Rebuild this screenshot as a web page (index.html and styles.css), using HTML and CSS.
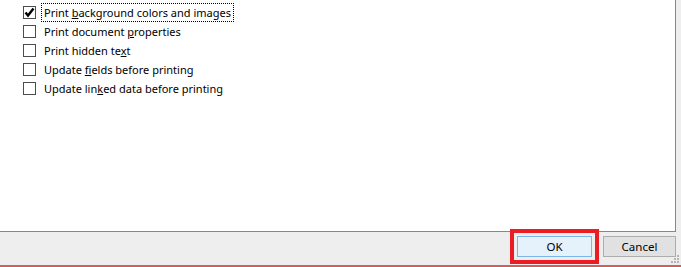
FILE: index.html
```html
<!DOCTYPE html>
<html>
<head>
<meta charset="utf-8">
<link rel="stylesheet" href="styles.css">
</head>
<body>
<div class="dialog">
  <div class="panel">
    <div class="options">
      <div class="row">
        <span class="box checked"><svg width="11" height="11" viewBox="0 0 11 11"><path d="M1.5 5.5 L4 8.5 L9.5 1.5" fill="none" stroke="#000" stroke-width="2.4"/></svg></span>
        <span class="label focus">Print <u>b</u>ackground colors and images</span>
      </div>
      <div class="row">
        <span class="box"></span>
        <span class="label">Print document <u>p</u>roperties</span>
      </div>
      <div class="row">
        <span class="box"></span>
        <span class="label">Print hidden te<u>x</u>t</span>
      </div>
      <div class="row">
        <span class="box"></span>
        <span class="label">Update <u>f</u>ields before printing</span>
      </div>
      <div class="row">
        <span class="box"></span>
        <span class="label">Update lin<u>k</u>ed data before printing</span>
      </div>
    </div>
  </div>
  <div class="footer">
    <span class="highlight"><button class="btn ok">OK</button></span>
    <button class="btn cancel">Cancel</button>
    <svg class="grip" width="9" height="9" viewBox="0 0 9 9">
      <rect x="6" y="0" width="2" height="2" fill="#b5b5b5"/>
      <rect x="3" y="3" width="2" height="2" fill="#b5b5b5"/>
      <rect x="6" y="3" width="2" height="2" fill="#b5b5b5"/>
      <rect x="0" y="6" width="2" height="2" fill="#b5b5b5"/>
      <rect x="3" y="6" width="2" height="2" fill="#b5b5b5"/>
      <rect x="6" y="6" width="2" height="2" fill="#b5b5b5"/>
    </svg>
  </div>
  <div class="redline"></div>
</div>
</body>
</html>
```
FILE: styles.css
```css
html, body {
  margin: 0;
  padding: 0;
  background: #eeeeee;
}
body {
  font-family: "Segoe UI", "Noto Sans", "DejaVu Sans", sans-serif;
  font-size: 11px;
  color: #000;
  width: 681px;
  height: 267px;
  overflow: hidden;
}
.dialog {
  display: flex;
  flex-direction: column;
  height: 267px;
}
.panel {
  width: 675px;
  height: 231px;
  background: #fff;
  border-right: 1px solid #838790;
  border-bottom: 1px solid #838790;
  box-sizing: content-box;
}
.options {
  display: flex;
  flex-direction: column;
  padding-top: 3px;
}
.row {
  display: flex;
  align-items: center;
  height: 19px;
  padding-left: 23px;
}
.box {
  width: 11px;
  height: 11px;
  border: 1px solid #4d4d4d;
  background: #fff;
  display: flex;
  align-items: center;
  justify-content: center;
  margin-right: 5px;
}
.label {
  border: 1px dotted transparent;
  padding: 0 2px;
  line-height: 17px;
  white-space: nowrap;
}
.label.focus {
  border-color: #000;
}
.footer {
  position: relative;
  height: 33px;
  display: flex;
  align-items: flex-start;
  justify-content: flex-end;
  padding: 4px 5px 0 0;
  box-sizing: border-box;
}
.highlight {
  position: relative;
  display: flex;
  margin-right: 11px;
}
.highlight::after {
  content: "";
  position: absolute;
  left: -7px;
  top: -7px;
  right: -7px;
  bottom: -7px;
  border: 4px solid #ec1c24;
  pointer-events: none;
}
.btn {
  font-family: inherit;
  font-size: 11.5px;
  color: #000;
  height: 21px;
  padding: 0;
  margin: 0;
  box-sizing: border-box;
}
.ok {
  width: 75px;
  background: #e5f1fb;
  border: 1px solid #7eb4ea;
}
.cancel {
  width: 73px;
  background: #e1e1e1;
  border: 1px solid #adadad;
}
.grip {
  position: absolute;
  right: 1px;
  bottom: 1px;
}
.redline {
  height: 2px;
  background: #d2605a;
}
```
